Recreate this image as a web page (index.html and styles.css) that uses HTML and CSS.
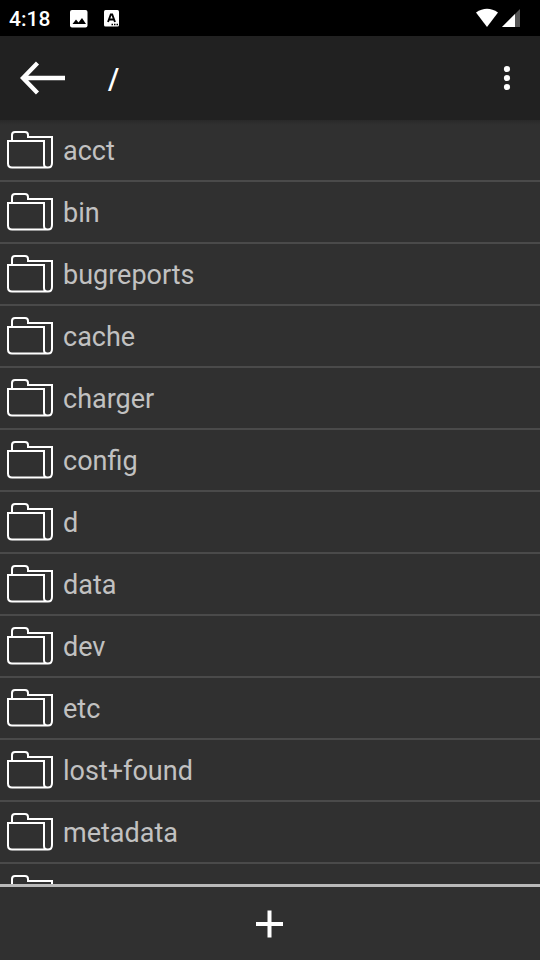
FILE: index.html
```
<!DOCTYPE html>
<html lang="en">
<head>
<meta charset="utf-8">
<title>Files</title>
<link rel="stylesheet" href="styles.css">
</head>
<body>
<svg class="defs" width="0" height="0">
  <symbol id="folder" viewBox="0 0 48 40">
    <path d="M6 11V5Q6 2 9 2H19Q22 2 22 5V7H46V33Q46 37.500 42 37.500H6Q2 37.500 2 33.500V11H38V34Q38 37.500 41.500 37.500"/>
  </symbol>
</svg>
<div class="status">
  <span class="clock">4:18</span>
  <svg class="photo" width="18" height="18" viewBox="0 0 18 18"><rect width="17.5" height="17.5" rx="2" fill="#fff"/><path d="M2.5 14L6 9.5l2.5 3L12 8l4 6z" fill="#000"/></svg>
  <svg class="keyboard" width="16" height="17" viewBox="0 0 16 17"><rect width="15" height="16.5" rx="1.5" fill="#fff"/><path d="M4 12L6.800 4.500H8.200L11 12M5.300 9.500H9.700" fill="none" stroke="#000" stroke-width="1.900"/><path d="M7.500 14.500h1.500m1 0h1.500m1 0h1.500" stroke="#000" stroke-width="1.500"/></svg>
  <svg class="signals" width="46" height="20" viewBox="0 0 46 20"><path d="M1 4.500Q12-3 23 4.500L12 19z" fill="#fff"/><path d="M45 1V19H27z" fill="#555"/><path d="M40 6V19H27z" fill="#fff"/></svg>
</div>
<header class="toolbar">
  <svg class="back" width="46" height="34" viewBox="0 0 46 34"><path d="M17.500 2L3 17l14.500 15M3 17H45" fill="none" stroke="#fff" stroke-width="4.300"/></svg>
  <h1 class="path">/</h1>
  <svg class="more" width="8" height="26" viewBox="0 0 8 26" fill="#fff"><circle cx="4" cy="4" r="3.100"/><circle cx="4" cy="13" r="3.100"/><circle cx="4" cy="22" r="3.100"/></svg>
</header>
<ul class="list">
  <li class="row"><svg class="folder"><use href="#folder"/></svg><span>acct</span></li>
  <li class="row"><svg class="folder"><use href="#folder"/></svg><span>bin</span></li>
  <li class="row"><svg class="folder"><use href="#folder"/></svg><span>bugreports</span></li>
  <li class="row"><svg class="folder"><use href="#folder"/></svg><span>cache</span></li>
  <li class="row"><svg class="folder"><use href="#folder"/></svg><span>charger</span></li>
  <li class="row"><svg class="folder"><use href="#folder"/></svg><span>config</span></li>
  <li class="row"><svg class="folder"><use href="#folder"/></svg><span>d</span></li>
  <li class="row"><svg class="folder"><use href="#folder"/></svg><span>data</span></li>
  <li class="row"><svg class="folder"><use href="#folder"/></svg><span>dev</span></li>
  <li class="row"><svg class="folder"><use href="#folder"/></svg><span>etc</span></li>
  <li class="row"><svg class="folder"><use href="#folder"/></svg><span>lost+found</span></li>
  <li class="row"><svg class="folder"><use href="#folder"/></svg><span>metadata</span></li>
  <li class="row"><svg class="folder"><use href="#folder"/></svg></li>
</ul>
<footer class="bottom">
  <svg width="28" height="28" viewBox="0 0 28 28"><path d="M13.500 .5V27.500M0 14H27" stroke="#fff" stroke-width="4"/></svg>
</footer>
</body>
</html>
```
FILE: styles.css
```
* { box-sizing: border-box; }
body {
  margin: 0;
  height: 960px;
  display: flex;
  flex-direction: column;
  overflow: hidden;
  background: #303030;
  font-family: Roboto, sans-serif;
}
svg { display: block; flex: none; }
.defs { position: absolute; }
.status {
  flex: none;
  height: 36px;
  display: flex;
  align-items: center;
  padding: 0 19px 0 9px;
  background: #000;
  color: #fff;
}
.clock {
  width: 61px;
  font-size: 21px;
  font-weight: 500;
  line-height: 36px;
  padding-top: 1px;
}
.photo { margin-top: 1px; }
.keyboard { margin: 1px 0 0 16px; }
.signals { margin-left: auto; }
.toolbar {
  flex: none;
  height: 84px;
  display: flex;
  align-items: center;
  padding: 0 29px 0 20px;
  background: #212121;
  color: #fff;
}
.path {
  margin: 0 0 0 42px;
  padding-top: 2px;
  font-size: 29px;
  font-weight: 500;
  line-height: 34px;
}
.more { margin-left: auto; }
.list {
  flex: 1;
  min-height: 0;
  margin: 0;
  padding: 0;
  overflow: hidden;
  list-style: none;
  color: #c1c1c1;
  background: linear-gradient(#292929, #303030 5px);
}
.row {
  height: 62px;
  display: flex;
  align-items: center;
  padding-left: 6px;
  border-bottom: 2px solid #4a4a4a;
  font-size: 27px;
  line-height: 32px;
}
.row span { padding-top: 2px; }
.folder {
  width: 48px;
  height: 40px;
  margin-right: 9px;
  fill: none;
  stroke: #fff;
  stroke-width: 2;
}
.bottom {
  flex: none;
  height: 76px;
  display: flex;
  align-items: center;
  justify-content: center;
  border-top: 3px solid #b9b9b9;
}
```
